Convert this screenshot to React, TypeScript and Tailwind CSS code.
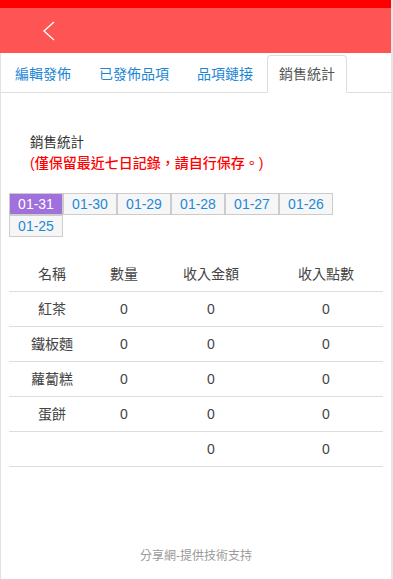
const tabs = ["編輯發佈", "已發佈品項", "品項鏈接", "銷售統計"];
const dates = ["01-31", "01-30", "01-29", "01-28", "01-27", "01-26", "01-25"];
const rows = [
  ["紅茶", "0", "0", "0"],
  ["鐵板麵", "0", "0", "0"],
  ["蘿蔔糕", "0", "0", "0"],
  ["蛋餅", "0", "0", "0"],
  ["", "", "0", "0"],
];

const App = () => {
  return (
    <div
      className="min-h-screen w-full bg-[#e6e6e6] text-[#333]"
      style={{ fontFamily: '"Liberation Sans", Arial, "Noto Sans CJK TC", sans-serif' }}
    >
      <div className="w-[391px] min-h-screen bg-white border-l border-[#e2e2e2] flex flex-col">
        {/* header */}
        <div className="h-[8px] bg-[#ff0000] -ml-px"></div>
        <div className="h-[45px] bg-[#ff5454] -ml-px flex items-center pl-[42px]">
          <svg width="13" height="20" viewBox="0 0 13 20" fill="none">
            <path d="M12 1 L2 10 L12 19" stroke="#fff" strokeWidth="1.4" />
          </svg>
        </div>

        {/* tabs */}
        <div className="h-[40px] border-b border-[#ddd] flex items-end pl-[2px]">
          {tabs.map((t, i) => (
            <div
              key={t}
              className={`h-[38px] -mb-px mr-[4px] px-[11px] flex items-center text-[14px] border rounded-t-[4px] ${
                i === 3
                  ? "border-[#ddd] border-b-white bg-white text-[#555] -ml-[2px]"
                  : "border-transparent text-[#1d86d3]"
              }`}
            >
              {t}
            </div>
          ))}
        </div>

        {/* title */}
        <div className="pl-[29px] pt-[39px] text-[14px] leading-[21px]">
          <div className="text-[#333] text-[13.5px]">銷售統計</div>
          <div className="text-[#ff0000] font-medium text-[14px]">(僅保留最近七日記錄，請自行保存。)</div>
        </div>

        {/* date buttons */}
        <div className="mt-[19px] pl-[8px] flex flex-wrap w-[340px]">
          {dates.map((d, i) => (
            <div
              key={d}
              className={`w-[54px] h-[22px] border border-[#ccc] flex items-center justify-center text-[14px] ${
                i === 0 ? "bg-[#a070dc] text-white" : "bg-[#f6f6f6] text-[#1d8ad8]"
              }`}
            >
              {d}
            </div>
          ))}
        </div>

        {/* table */}
        <div className="mt-[20px] ml-[8px] w-[374px] text-[14px] text-[#444]">
          <div className="grid grid-cols-[86px_58px_116px_114px] h-[35px] items-center text-center border-b border-[#ddd]">
            <div>名稱</div>
            <div>數量</div>
            <div>收入金額</div>
            <div>收入點數</div>
          </div>
          {rows.map((r, i) => (
            <div
              key={i}
              className="grid grid-cols-[86px_58px_116px_114px] h-[35px] items-center text-center border-b border-[#ddd]"
            >
              {r.map((c, j) => (
                <div key={j}>{c}</div>
              ))}
            </div>
          ))}
        </div>

        {/* footer */}
        <div className="mt-[80px] text-center text-[12px] text-[#999]">分享網-提供技術支持</div>
      </div>
    </div>
  );
};

export default App;
